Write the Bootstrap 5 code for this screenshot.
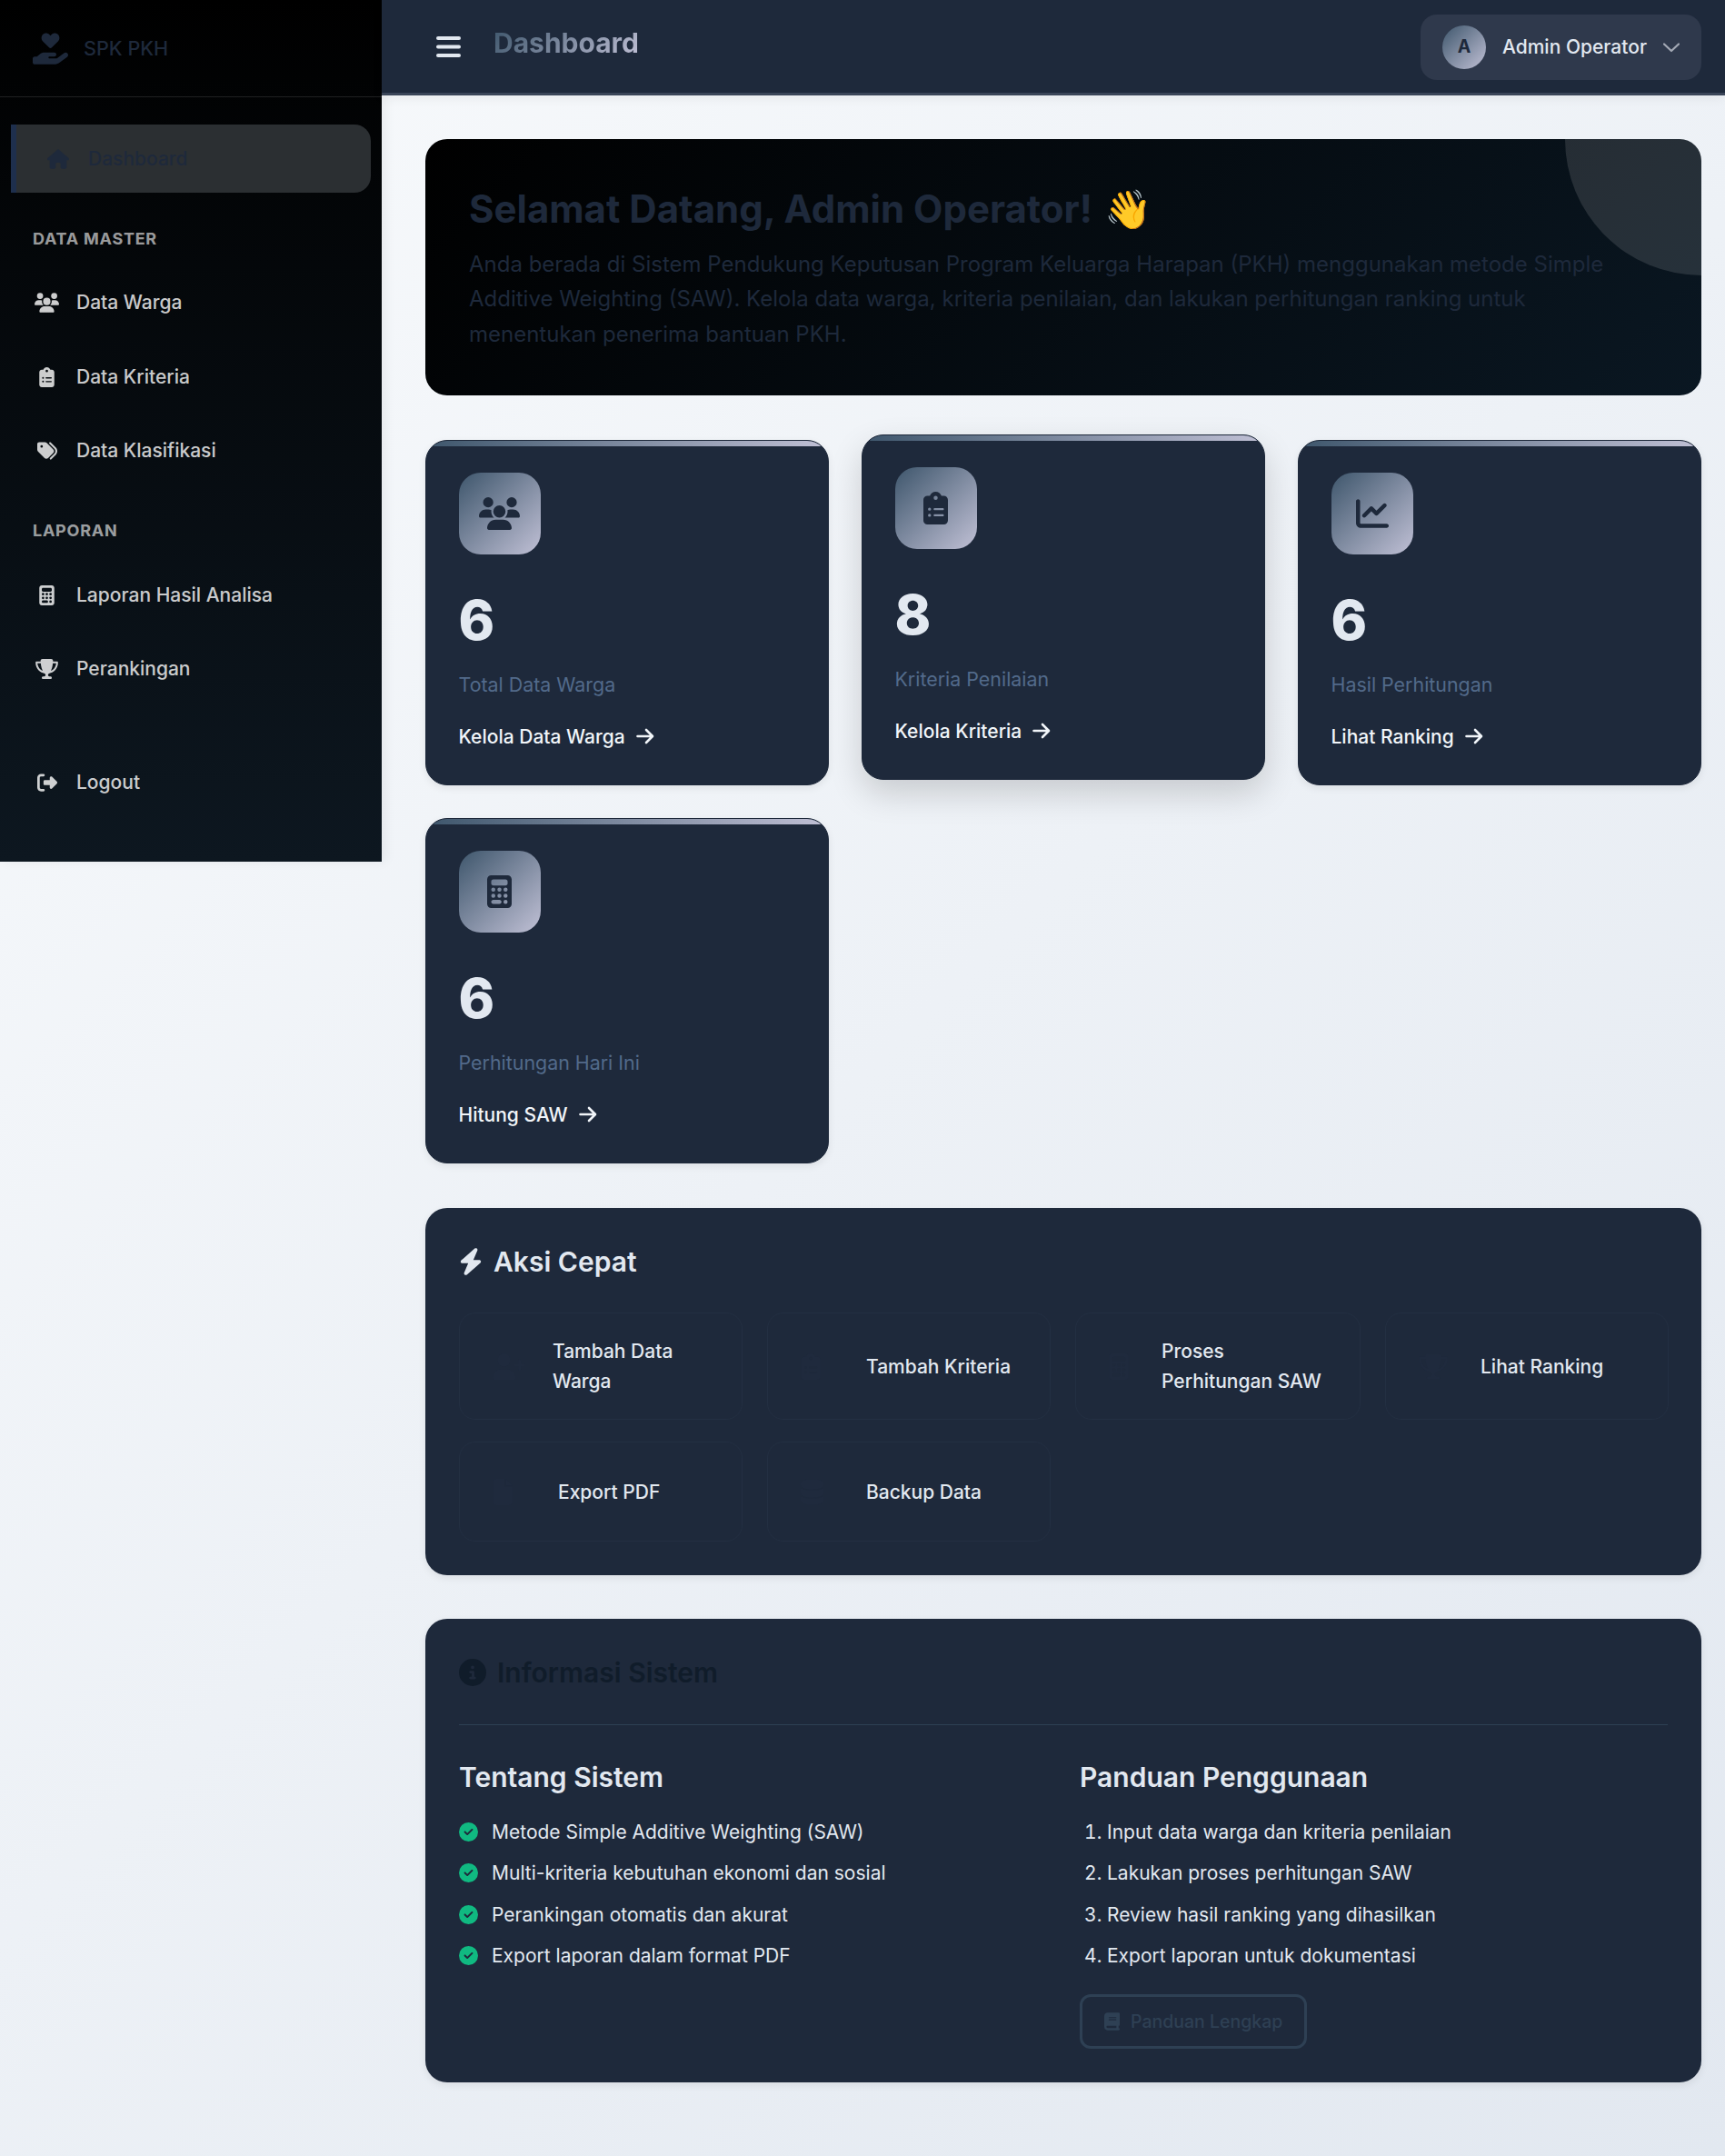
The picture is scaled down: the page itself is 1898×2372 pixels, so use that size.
<!DOCTYPE html>
<html lang="en">
<head>
  <meta charset="UTF-8" />
  <meta name="viewport" content="width=device-width, initial-scale=1.0"/>
  <title>Dashboard - SPK PKH</title>
  <link href="https://cdn.jsdelivr.net/npm/bootstrap@5.3.0/dist/css/bootstrap.min.css" rel="stylesheet"/>
  <style>
    body { font-family: Inter, "Liberation Sans", sans-serif; font-size: 21px; min-height: 2372px; background: linear-gradient(135deg, #f8fafc 0%, #e2e8f0 100%); color: #e2e8f0; }
    svg { fill: currentColor; display: block; flex-shrink: 0; }
    .sprite-defs { display: none; }
    .main-col { min-width: 0; }

    .side-bar { width: 420px; height: 948px; background: linear-gradient(180deg, #000 0%, #0d1720 100%); box-shadow: 4px 0 12px rgba(0,0,0,.06); }
    .side-brand { height: 107px; padding-left: 36px; gap: 17px; border-bottom: 1.5px solid rgba(255,255,255,.12); color: #1e293b; font-size: 21.6px; font-weight: 500; }
    .side-menu { padding: 30px 12px 0; }
    .side-link { height: 75px; margin-bottom: 6.5px; padding-left: 24px; color: rgba(255,255,255,.8); font-weight: 500; text-decoration: none; border-radius: 0 18px 18px 0; }
    .side-ico { width: 31px; margin-right: 17px; }
    .side-link.is-active { background: #2b2f32; color: #1e293b; border-left: 6px solid #1e2f4d; padding-left: 34px; }
    .side-link.is-active .side-ico { width: 24px; margin-right: 21px; }
    .side-label { padding: 32px 24px 21px; font-size: 18px; line-height: 24px; font-weight: 700; letter-spacing: .75px; color: rgba(255,255,255,.62); }
    .side-gap { height: 43px; }

    .top-bar { height: 105px; background: #1e293b; border-bottom: 3px solid #3a4558; padding: 0 26px 0 60px; box-shadow: 0 3px 12px rgba(0,0,0,.06); }
    .top-title { font-size: 30px; font-weight: 700; margin: 0 0 8px 36px; background: linear-gradient(135deg, #3e566c, #c0c0d5); -webkit-background-clip: text; background-clip: text; color: transparent; }
    .user-btn { height: 72px; width: 309px; margin-top: 2px; background: #2f394c; border-radius: 18px; padding: 0 24px; gap: 18px; color: #e2e8f0; font-weight: 500; font-size: 21px; white-space: nowrap; }
    .user-pic { width: 48px; height: 48px; border-radius: 50%; background: linear-gradient(135deg, #3e566c, #c0c0d5); color: #1e293b; font-size: 19.5px; font-weight: 700; }
    .user-caret { color: #a3a9b5; }

    .page-body { padding: 48px 26px 48px 48px; }
    .hero-box { position: relative; overflow: hidden; height: 282px; padding: 52px 48px 0; border-radius: 24px; background: linear-gradient(135deg, #000 0%, #0a1722 100%); color: #1e293b; margin-bottom: 49px; }
    .hero-box::before { content: ""; position: absolute; top: -150px; right: -150px; width: 300px; height: 300px; border-radius: 50%; background: rgba(255,255,255,.12); }
    .hero-title { font-size: 42px; font-weight: 700; line-height: 50px; margin-bottom: 17px; }
    .hero-wave { margin-left: 3px; }
    .hero-text { font-size: 24px; line-height: 38.4px; margin: 0; position: relative; }

    .stat-grid { display: grid; grid-template-columns: repeat(3, 1fr); gap: 36px; margin-bottom: 49px; }
    .stat-box { position: relative; overflow: hidden; height: 380px; padding: 34.5px 36px 0 35.5px; background: #1e293b; border: 1.5px solid #1e293b; border-radius: 24px; box-shadow: 0 3px 9px rgba(0,0,0,.08); }
    .stat-box::before { content: ""; position: absolute; inset: 0 0 auto 0; height: 6px; background: linear-gradient(90deg, #3e566c, #c0c0d5); }
    .stat-box.is-raised { transform: translateY(-6px); box-shadow: 0 15px 36px rgba(0,0,0,.16); }
    .stat-icon { width: 90px; height: 90px; border-radius: 24px; background: linear-gradient(135deg, #3e566c, #c0c0d5); color: #1e293b; }
    .stat-num { font-size: 60px; line-height: 72px; font-weight: 800; margin-top: 36px; color: #e2e8f0; }
    .stat-label { color: #526a8a; font-size: 21.4px; line-height: 32px; margin-top: 19px; }
    .stat-link { color: #f1f5f9; font-weight: 500; text-decoration: none; margin-top: 26px; gap: 12px; }

    .panel-box { background: #1e293b; border-radius: 24px; padding: 37px; margin-bottom: 48px; box-shadow: 0 3px 9px rgba(0,0,0,.08); }
    .panel-box:last-child { margin-bottom: 0; }
    .panel-title { font-size: 30px; font-weight: 600; line-height: 44px; gap: 12px; margin: 0; }
    .tile-grid { display: grid; grid-template-columns: 312px 312px 314px 312px; gap: 24px 27px; margin-top: 34px; }
    .tile-btn { min-height: 118px; padding: 0 30px 0 36px; border: 1.5px solid #232f42; border-radius: 18px; color: #e2e8f0; font-weight: 500; line-height: 33px; text-decoration: none; }
    .tile-ico { flex-shrink: 0; width: 72px; color: #1f2a3d; }
    .tile-ico-a { width: 66px; }
    .tile-ico-b { width: 58px; }
    .tile-ico-c { width: 68px; }
    .tile-low { min-height: 110px; }

    .info-head { color: #101c2a; padding-bottom: 35px; margin-bottom: 35px; border-bottom: 1.5px solid #2e4054; }
    .info-row { --bs-gutter-x: 36px; }
    .info-sub { font-size: 30px; font-weight: 600; line-height: 44px; margin-bottom: 16px; color: #e2e8f0; }
    .info-list { list-style: none; padding: 0; margin: 0; line-height: 45.3px; }
    .info-list li { gap: 15px; }
    .info-list svg { color: #10b981; }
    .num-list { padding-left: 30px; margin: 0; line-height: 45.3px; }
    .guide-btn { height: 60px; margin-top: 20px; padding: 0 24px; gap: 12px; border: 3px solid #2e4054; border-radius: 12px; color: #2e4054; font-size: 19.5px; font-weight: 500; background: none; }
  </style>
</head>
<body>

  <svg class="sprite-defs" xmlns="http://www.w3.org/2000/svg">
    <symbol id="i-heart-hand" viewBox="0 0 576 512"><path d="M163.900 136.900c-29.400-29.800-29.400-78.200 0-108s77-29.800 106.400 0l17.700 18 17.700-18c29.400-29.800 77-29.800 106.400 0s29.400 78.200 0 108L310.500 239.100c-6.100 6.200-14.300 9.300-22.500 9.300s-16.300-3.100-22.500-9.300L163.900 136.900zM568.200 336.300c13.100 17.800 9.300 42.800-8.500 55.900L433.100 485.500c-23.400 17.200-51.600 26.500-80.700 26.500H192 32c-17.700 0-32-14.300-32-32V416c0-17.700 14.300-32 32-32H68.800l44.900-36c22.700-18.200 50.900-28 80-28H272h16 64c17.700 0 32 14.300 32 32s-14.300 32-32 32H288 272c-8.800 0-16 7.200-16 16s7.200 16 16 16H392.600l119.700-88.200c17.800-13.100 42.800-9.300 55.900 8.500z"/></symbol>
    <symbol id="i-house" viewBox="0 0 576 512"><path d="M575.800 255.500c0 18-15 32.100-32 32.100h-32l.7 160.200c0 2.700-.2 5.400-.5 8.100V472c0 22.100-17.900 40-40 40H456c-1.100 0-2.200 0-3.300-.1c-1.400 .1-2.800 .1-4.200 .1H416 392c-22.100 0-40-17.900-40-40V448 384c0-17.700-14.300-32-32-32H256c-17.700 0-32 14.300-32 32v64 24c0 22.100-17.900 40-40 40H160 128.100c-1.500 0-3-.1-4.500-.2c-1.200 .1-2.400 .2-3.600 .2H104c-22.100 0-40-17.900-40-40V360c0-.9 0-1.900 .1-2.800V287.600H32c-18 0-32-14-32-32.100c0-9 3-17 10-24L266.400 8c7-7 15-8 22-8s15 2 21 7L564.800 231.500c8 7 12 15 11 24z"/></symbol>
    <symbol id="i-users" viewBox="0 0 640 512"><path d="M144 0a80 80 0 1 1 0 160A80 80 0 1 1 144 0zM512 0a80 80 0 1 1 0 160A80 80 0 1 1 512 0zM0 298.700C0 239.800 47.800 192 106.700 192h42.700c15.900 0 31 3.500 44.600 9.700c-1.300 7.200-1.900 14.700-1.900 22.300c0 38.200 16.800 72.500 43.300 96c-.2 0-.4 0-.7 0H21.300C9.600 320 0 310.400 0 298.700zM405.300 320c-.2 0-.4 0-.7 0c26.600-23.500 43.300-57.800 43.300-96c0-7.600-.7-15-1.900-22.300c13.600-6.300 28.700-9.700 44.600-9.700h42.700C592.200 192 640 239.800 640 298.700c0 11.800-9.600 21.300-21.300 21.300H405.300zM224 224a96 96 0 1 1 192 0 96 96 0 1 1 -192 0zM128 485.300C128 411.700 187.700 352 261.300 352H378.700C452.300 352 512 411.700 512 485.300c0 14.700-11.900 26.700-26.700 26.700H154.700c-14.700 0-26.700-11.900-26.700-26.700z"/></symbol>
    <symbol id="i-clipboard" viewBox="0 0 384 512"><path d="M192 0c-41.800 0-77.400 26.700-90.500 64H64C28.700 64 0 92.700 0 128V448c0 35.300 28.700 64 64 64H320c35.300 0 64-28.700 64-64V128c0-35.300-28.700-64-64-64H282.500C269.400 26.700 233.800 0 192 0zm0 64a32 32 0 1 1 0 64 32 32 0 1 1 0-64zM72 272a24 24 0 1 1 48 0 24 24 0 1 1 -48 0zm104-16H304c8.800 0 16 7.200 16 16s-7.200 16-16 16H176c-8.800 0-16-7.200-16-16s7.200-16 16-16zM72 368a24 24 0 1 1 48 0 24 24 0 1 1 -48 0zm88 0c0-8.800 7.200-16 16-16H304c8.800 0 16 7.200 16 16s-7.200 16-16 16H176c-8.800 0-16-7.200-16-16z"/></symbol>
    <symbol id="i-tags" viewBox="0 0 512 512"><path d="M345 39.100L472.800 168.400c52.400 53 52.400 138.200 0 191.200L360.800 472.900c-9.300 9.400-24.500 9.500-33.900 .2s-9.500-24.500-.2-33.900L438.600 325.900c33.900-34.300 33.900-89.400 0-123.700L310.900 72.900c-9.300-9.400-9.200-24.600 .2-33.900s24.600-9.200 33.900 .2zM0 229.500V80C0 53.500 21.500 32 48 32H197.500c17 0 33.300 6.700 45.300 18.700l168 168c25 25 25 65.500 0 90.500L277.300 442.700c-25 25-65.500 25-90.500 0l-168-168C6.700 262.700 0 246.500 0 229.500zM144 144a32 32 0 1 0 -64 0 32 32 0 1 0 64 0z"/></symbol>
    <symbol id="i-calc" viewBox="0 0 384 512"><path d="M64 0C28.700 0 0 28.700 0 64V448c0 35.300 28.700 64 64 64H320c35.300 0 64-28.700 64-64V64c0-35.300-28.700-64-64-64H64zM96 64H288c17.700 0 32 14.300 32 32v32c0 17.700-14.300 32-32 32H96c-17.700 0-32-14.300-32-32V96c0-17.700 14.300-32 32-32zm32 160a32 32 0 1 1 -64 0 32 32 0 1 1 64 0zM96 352a32 32 0 1 1 0-64 32 32 0 1 1 0 64zM64 416c0-17.700 14.300-32 32-32h96c17.700 0 32 14.300 32 32s-14.300 32-32 32H96c-17.700 0-32-14.300-32-32zM192 256a32 32 0 1 1 0-64 32 32 0 1 1 0 64zm32 64a32 32 0 1 1 -64 0 32 32 0 1 1 64 0zm64-64a32 32 0 1 1 0-64 32 32 0 1 1 0 64zm32 64a32 32 0 1 1 -64 0 32 32 0 1 1 64 0zM288 448a32 32 0 1 1 0-64 32 32 0 1 1 0 64z"/></symbol>
    <symbol id="i-trophy" viewBox="0 0 576 512"><path d="M400 0H176c-26.500 0-48.100 21.800-47.100 48.200c.2 5.300 .4 10.600 .7 15.800H24C10.700 64 0 74.700 0 88c0 92.600 33.500 157 78.500 200.700c44.300 43.100 98.300 64.800 138.100 75.800c23.400 6.500 39.400 26 39.400 45.600c0 20.900-17 37.900-37.900 37.900H192c-17.700 0-32 14.300-32 32s14.300 32 32 32H384c17.700 0 32-14.300 32-32s-14.300-32-32-32H357.900C337 448 320 431 320 410.100c0-19.600 15.900-39.200 39.400-45.600c39.900-11 93.900-32.700 138.200-75.800C542.500 245 576 180.600 576 88c0-13.300-10.700-24-24-24H446.400c.3-5.200 .5-10.400 .7-15.800C448.100 21.800 426.500 0 400 0zM48.900 112h84.400c9.100 90.100 29.200 150.300 51.900 190.600c-24.900-11-50.800-26.500-73.200-48.300c-32-31.100-58-76-63-142.300zM464.100 254.300c-22.400 21.800-48.300 37.300-73.200 48.300c22.700-40.300 42.800-100.500 51.900-190.600h84.400c-5.100 66.300-31.100 111.200-63 142.300z"/></symbol>
    <symbol id="i-logout" viewBox="0 0 512 512"><path d="M377.900 105.900L500.700 228.700c7.200 7.200 11.300 17.100 11.300 27.300s-4.100 20.100-11.300 27.300L377.900 406.100c-6.400 6.400-15 9.900-24 9.900c-18.700 0-33.900-15.200-33.900-33.900l0-62.100-128 0c-17.700 0-32-14.300-32-32l0-64c0-17.700 14.300-32 32-32l128 0 0-62.100c0-18.700 15.200-33.900 33.900-33.900c9 0 17.600 3.600 24 9.900zM160 96L96 96c-17.700 0-32 14.300-32 32l0 256c0 17.700 14.300 32 32 32l64 0c17.700 0 32 14.300 32 32s-14.300 32-32 32l-64 0c-53 0-96-43-96-96L0 128C0 75 43 32 96 32l64 0c17.700 0 32 14.300 32 32s-14.300 32-32 32z"/></symbol>
    <symbol id="i-chart" viewBox="0 0 512 512"><path d="M64 64c0-17.700-14.300-32-32-32S0 46.300 0 64V400c0 44.200 35.800 80 80 80H480c17.700 0 32-14.300 32-32s-14.300-32-32-32H80c-8.800 0-16-7.200-16-16V64zm406.600 86.600c12.500-12.500 12.500-32.800 0-45.300s-32.800-12.500-45.300 0L320 210.700l-57.400-57.400c-12.500-12.500-32.800-12.500-45.300 0l-112 112c-12.500 12.500-12.500 32.800 0 45.300s32.800 12.500 45.300 0L240 221.300l57.400 57.400c12.500 12.500 32.800 12.500 45.300 0l128-128z"/></symbol>
    <symbol id="i-arrow" viewBox="0 0 20 18"><path d="M1.500 9h16M11 2l7 7-7 7" fill="none" stroke="currentColor" stroke-width="2.600" stroke-linecap="round" stroke-linejoin="round"/></symbol>
    <symbol id="i-bolt" viewBox="0 0 448 512"><path d="M349.400 44.600c5.900-13.700 1.500-29.700-10.600-38.500s-28.600-8-39.900 1.800l-256 224c-10 8.800-13.600 22.900-8.900 35.300S50.700 288 64 288H175.500L98.600 467.400c-5.900 13.700-1.500 29.700 10.600 38.500s28.600 8 39.900-1.800l256-224c10-8.800 13.600-22.900 8.900-35.300s-16.600-19.900-30-19.900H272.500L349.400 44.600z"/></symbol>
    <symbol id="i-info" viewBox="0 0 512 512"><path d="M256 512A256 256 0 1 0 256 0a256 256 0 1 0 0 512zM216 336h24V272H216c-13.300 0-24-10.700-24-24s10.700-24 24-24h48c13.300 0 24 10.700 24 24v88h8c13.300 0 24 10.700 24 24s-10.700 24-24 24H216c-13.300 0-24-10.700-24-24s10.700-24 24-24zm40-208a32 32 0 1 1 0 64 32 32 0 1 1 0-64z"/></symbol>
    <symbol id="i-check" viewBox="0 0 512 512"><path d="M256 512A256 256 0 1 0 256 0a256 256 0 1 0 0 512zM369 209L241 337c-9.400 9.400-24.600 9.400-33.900 0l-64-64c-9.400-9.400-9.400-24.600 0-33.900s24.600-9.400 33.900 0l47 47L335 175c9.400-9.400 24.600-9.400 33.900 0s9.400 24.600 0 33.900z"/></symbol>
    <symbol id="i-book" viewBox="0 0 448 512"><path d="M96 0C43 0 0 43 0 96V416c0 53 43 96 96 96H384h32c17.700 0 32-14.300 32-32s-14.300-32-32-32V384c17.700 0 32-14.300 32-32V32c0-17.700-14.300-32-32-32H384 96zm0 384H352v64H96c-17.700 0-32-14.300-32-32s14.300-32 32-32zm32-240c0-8.800 7.200-16 16-16H336c8.800 0 16 7.200 16 16s-7.200 16-16 16H144c-8.800 0-16-7.200-16-16zm16 48H336c8.800 0 16 7.200 16 16s-7.200 16-16 16H144c-8.800 0-16-7.200-16-16s7.200-16 16-16z"/></symbol>
    <symbol id="i-user-plus" viewBox="0 0 640 512"><path d="M96 128a128 128 0 1 1 256 0A128 128 0 1 1 96 128zM0 482.300C0 383.800 79.800 304 178.300 304h91.400C368.200 304 448 383.800 448 482.300c0 16.400-13.300 29.700-29.700 29.700H29.700C13.300 512 0 498.700 0 482.300zM504 312V248H440c-13.300 0-24-10.700-24-24s10.700-24 24-24h64V136c0-13.300 10.700-24 24-24s24 10.700 24 24v64h64c13.300 0 24 10.700 24 24s-10.700 24-24 24H552v64c0 13.300-10.700 24-24 24s-24-10.700-24-24z"/></symbol>
    <symbol id="i-file" viewBox="0 0 384 512"><path d="M64 0C28.700 0 0 28.700 0 64V448c0 35.300 28.700 64 64 64H320c35.300 0 64-28.700 64-64V160H256c-17.700 0-32-14.300-32-32V0H64zM256 0V128H384L256 0z"/></symbol>
    <symbol id="i-db" viewBox="0 0 448 512"><path d="M448 80v48c0 44.200-100.300 80-224 80S0 172.200 0 128V80C0 35.800 100.300 0 224 0S448 35.800 448 80zM0 176c48 34 134 48 224 48s176-14 224-48v112c0 44-100 80-224 80S0 332 0 288zM0 336c48 34 134 48 224 48s176-14 224-48v96c0 44-100 80-224 80S0 476 0 432z"/></symbol>
  </svg>

  <div class="d-flex align-items-start">
    <aside class="side-bar flex-shrink-0">
      <div class="side-brand d-flex align-items-center">
        <svg width="39" height="35"><use href="#i-heart-hand"/></svg>
        <span>SPK PKH</span>
      </div>
      <nav class="side-menu">
        <a class="side-link is-active d-flex align-items-center" href="#">
          <span class="side-ico d-flex justify-content-center"><svg width="24" height="22"><use href="#i-house"/></svg></span>
          <span>Dashboard</span>
        </a>
        <div class="side-label">DATA MASTER</div>
        <a class="side-link d-flex align-items-center" href="#">
          <span class="side-ico d-flex justify-content-center"><svg width="27" height="22"><use href="#i-users"/></svg></span>
          <span>Data Warga</span>
        </a>
        <a class="side-link d-flex align-items-center" href="#">
          <span class="side-ico d-flex justify-content-center"><svg width="17" height="22"><use href="#i-clipboard"/></svg></span>
          <span>Data Kriteria</span>
        </a>
        <a class="side-link d-flex align-items-center" href="#">
          <span class="side-ico d-flex justify-content-center"><svg width="22" height="22"><use href="#i-tags"/></svg></span>
          <span>Data Klasifikasi</span>
        </a>
        <div class="side-label">LAPORAN</div>
        <a class="side-link d-flex align-items-center" href="#">
          <span class="side-ico d-flex justify-content-center"><svg width="17" height="22"><use href="#i-calc"/></svg></span>
          <span>Laporan Hasil Analisa</span>
        </a>
        <a class="side-link d-flex align-items-center" href="#">
          <span class="side-ico d-flex justify-content-center"><svg width="25" height="22"><use href="#i-trophy"/></svg></span>
          <span>Perankingan</span>
        </a>
        <div class="side-gap"></div>
        <a class="side-link d-flex align-items-center" href="#">
          <span class="side-ico d-flex justify-content-center"><svg width="22" height="22"><use href="#i-logout"/></svg></span>
          <span>Logout</span>
        </a>
      </nav>
    </aside>

    <main class="main-col flex-grow-1">
      <header class="top-bar d-flex align-items-center justify-content-between">
        <div class="d-flex align-items-center">
          <svg width="27" height="23" viewBox="0 0 27 23"><rect width="27" height="4" rx="2"/><rect y="9.500" width="27" height="4" rx="2"/><rect y="19" width="27" height="4" rx="2"/></svg>
          <h1 class="top-title">Dashboard</h1>
        </div>
        <div class="user-btn d-flex align-items-center">
          <div class="user-pic d-flex align-items-center justify-content-center">A</div>
          <span>Admin Operator</span>
          <svg class="user-caret" width="18" height="11" viewBox="0 0 18 11"><path d="M1 1.500 9 9l8-7.500" fill="none" stroke="currentColor" stroke-width="2.200" stroke-linecap="round" stroke-linejoin="round"/></svg>
        </div>
      </header>

      <div class="page-body">
        <section class="hero-box">
          <h2 class="hero-title">Selamat Datang, Admin Operator! <span class="hero-wave">👋</span></h2>
          <p class="hero-text">Anda berada di Sistem Pendukung Keputusan Program Keluarga Harapan (PKH) menggunakan metode Simple Additive Weighting (SAW). Kelola data warga, kriteria penilaian, dan lakukan perhitungan ranking untuk menentukan penerima bantuan PKH.</p>
        </section>

        <section class="stat-grid">
          <div class="stat-box">
            <div class="stat-icon d-flex align-items-center justify-content-center"><svg width="45" height="36"><use href="#i-users"/></svg></div>
            <div class="stat-num">6</div>
            <div class="stat-label">Total Data Warga</div>
            <a class="stat-link d-flex align-items-center" href="#">Kelola Data Warga <svg width="20" height="18"><use href="#i-arrow"/></svg></a>
          </div>
          <div class="stat-box is-raised">
            <div class="stat-icon d-flex align-items-center justify-content-center"><svg width="27" height="36"><use href="#i-clipboard"/></svg></div>
            <div class="stat-num">8</div>
            <div class="stat-label">Kriteria Penilaian</div>
            <a class="stat-link d-flex align-items-center" href="#">Kelola Kriteria <svg width="20" height="18"><use href="#i-arrow"/></svg></a>
          </div>
          <div class="stat-box">
            <div class="stat-icon d-flex align-items-center justify-content-center"><svg width="36" height="36"><use href="#i-chart"/></svg></div>
            <div class="stat-num">6</div>
            <div class="stat-label">Hasil Perhitungan</div>
            <a class="stat-link d-flex align-items-center" href="#">Lihat Ranking <svg width="20" height="18"><use href="#i-arrow"/></svg></a>
          </div>
          <div class="stat-box">
            <div class="stat-icon d-flex align-items-center justify-content-center"><svg width="27" height="36"><use href="#i-calc"/></svg></div>
            <div class="stat-num">6</div>
            <div class="stat-label">Perhitungan Hari Ini</div>
            <a class="stat-link d-flex align-items-center" href="#">Hitung SAW <svg width="20" height="18"><use href="#i-arrow"/></svg></a>
          </div>
        </section>

        <section class="panel-box">
          <h3 class="panel-title d-flex align-items-center"><svg width="26" height="30"><use href="#i-bolt"/></svg>Aksi Cepat</h3>
          <div class="tile-grid">
            <a class="tile-btn d-flex align-items-center" href="#"><span class="tile-ico tile-ico-a"><svg width="36" height="29"><use href="#i-user-plus"/></svg></span><span>Tambah Data Warga</span></a>
            <a class="tile-btn d-flex align-items-center" href="#"><span class="tile-ico"><svg width="22" height="29"><use href="#i-clipboard"/></svg></span><span>Tambah Kriteria</span></a>
            <a class="tile-btn d-flex align-items-center" href="#"><span class="tile-ico tile-ico-b"><svg width="22" height="29"><use href="#i-calc"/></svg></span><span>Proses<br>Perhitungan SAW</span></a>
            <a class="tile-btn d-flex align-items-center" href="#"><span class="tile-ico tile-ico-c"><svg width="32" height="29"><use href="#i-trophy"/></svg></span><span>Lihat Ranking</span></a>
            <a class="tile-btn tile-low d-flex align-items-center" href="#"><span class="tile-ico"><svg width="22" height="29"><use href="#i-file"/></svg></span><span>Export PDF</span></a>
            <a class="tile-btn tile-low d-flex align-items-center" href="#"><span class="tile-ico"><svg width="25" height="29"><use href="#i-db"/></svg></span><span>Backup Data</span></a>
          </div>
        </section>

        <section class="panel-box">
          <h3 class="panel-title info-head d-flex align-items-center"><svg width="30" height="30"><use href="#i-info"/></svg>Informasi Sistem</h3>
          <div class="row info-row">
            <div class="col-6">
              <h4 class="info-sub">Tentang Sistem</h4>
              <ul class="info-list">
                <li class="d-flex align-items-center"><svg width="21" height="21"><use href="#i-check"/></svg>Metode Simple Additive Weighting (SAW)</li>
                <li class="d-flex align-items-center"><svg width="21" height="21"><use href="#i-check"/></svg>Multi-kriteria kebutuhan ekonomi dan sosial</li>
                <li class="d-flex align-items-center"><svg width="21" height="21"><use href="#i-check"/></svg>Perankingan otomatis dan akurat</li>
                <li class="d-flex align-items-center"><svg width="21" height="21"><use href="#i-check"/></svg>Export laporan dalam format PDF</li>
              </ul>
            </div>
            <div class="col-6">
              <h4 class="info-sub">Panduan Penggunaan</h4>
              <ol class="num-list">
                <li>Input data warga dan kriteria penilaian</li>
                <li>Lakukan proses perhitungan SAW</li>
                <li>Review hasil ranking yang dihasilkan</li>
                <li>Export laporan untuk dokumentasi</li>
              </ol>
              <button class="guide-btn d-inline-flex align-items-center" type="button"><svg width="17" height="20"><use href="#i-book"/></svg>Panduan Lengkap</button>
            </div>
          </div>
        </section>
      </div>
    </main>
  </div>

  <script src="https://cdn.jsdelivr.net/npm/bootstrap@5.3.0/dist/js/bootstrap.bundle.min.js"></script>
</body>
</html>
